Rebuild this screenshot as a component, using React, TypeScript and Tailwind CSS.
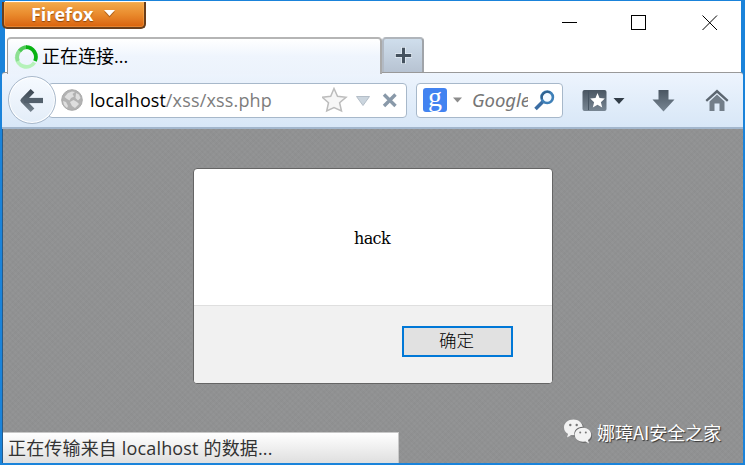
import React from "react";

const ui = "font-['Open_Sans','Noto_Sans_CJK_SC',sans-serif]";

function FirefoxButton() {
  return (
    <div className="flex h-[27px] w-[144px] items-center rounded-b-[5px] border-x-2 border-b-2 border-[#693e1b] bg-linear-to-b from-[#f3ab4b] via-[#e98a2c] to-[#d9620b] pl-[27px] shadow-[inset_0_0_0_1px_rgba(255,190,110,0.35)]">
      <span className="-mt-[2px] font-['Open_Sans',sans-serif] text-[18px] leading-[24px] font-bold tracking-[-0.05px] text-white [text-shadow:0_1px_1px_rgba(110,50,0,0.7)]">Firefox</span>
      <svg className="-mt-[2px] ml-[10px]" width="13" height="9" viewBox="0 0 13 9">
        <path d="M1 2.4H12L6.5 8.4Z" fill="#8d4a15" opacity=".6" />
        <path d="M1 1H12L6.5 7Z" fill="#fff" />
      </svg>
    </div>
  );
}

function WindowControls() {
  return (
    <svg className="mt-[12px] mr-[22px]" width="158" height="18" viewBox="0 0 158 18" fill="none" stroke="#000" shapeRendering="crispEdges">
      <path d="M1 8.5H16M70.500 1.500H84.500V15.500H70.500Z" />
      <path d="M141.500 1.500L156 16M156 1.500L141.500 16" shapeRendering="auto" />
    </svg>
  );
}

function Tabs() {
  return (
    <div className="flex h-[35px] pl-[5px]">
      <div className="z-10 flex h-[37px] w-[375px] items-center rounded-t-[4px] border-t-2 border-r-2 border-l border-t-[#b5b5b5] border-r-[#aaa] border-l-[#999] bg-linear-to-b from-white via-[#eff5fd] to-[#ecf3fc] pl-[6px]">
        <svg width="25" height="26" viewBox="0 0 25 26" fill="none" strokeWidth="3.8">
          <path d="M2.600 13A9.800 9.800 0 0 0 20.500 18.500" stroke="#b5f2b9" />
          <path d="M6.200 6.200A9.800 9.800 0 0 0 4 17" stroke="#8de093" />
          <path d="M5.500 7A9.800 9.800 0 0 1 13 3.200" stroke="#4cc955" />
          <path d="M12 3.200A9.800 9.800 0 0 1 21 17" stroke="#08b313" />
        </svg>
        <span className={`${ui} mt-[-1px] ml-[3px] text-[18px] leading-[24px] text-black`}>正在连接...</span>
      </div>
      <div className="flex h-[37px] w-[42px] items-center justify-center rounded-t-[4px] border-t-2 border-r-2 border-b-2 border-l-2 border-t-[#b0b5bb] border-r-[#a0a4a9] border-b-[#90969d] border-l-[#b2bac4] bg-linear-to-b from-[#cfdeec] to-[#b7c3d2]">
        <svg width="17" height="17" viewBox="0 0 17 17" fill="none">
          <path d="M8.500 0V17M0 8.500H17" stroke="#e2ebf3" strokeWidth="4.600" />
          <path d="M8.500 .8V16.200M.8 8.500H16.200" stroke="#45525f" strokeWidth="3" />
        </svg>
      </div>
    </div>
  );
}

function BackButton() {
  return (
    <div className="z-10 flex size-[48px] items-center justify-center rounded-full border-[1.5px] border-[#a9b9cb] bg-linear-to-b from-[#f6faff] to-[#e3edf8] shadow-[inset_0_0_0_1px_#fff]">
      <svg width="26" height="27" viewBox="0 0 26 27" fill="none">
        <defs>
          <linearGradient id="arrow" gradientUnits="userSpaceOnUse" x1="0" y1="2" x2="0" y2="25">
            <stop stopColor="#3a4550" />
            <stop offset="1" stopColor="#76848f" />
          </linearGradient>
        </defs>
        <path d="M13.500 3.800L4 13.500L13.500 23.200M5 13.500H24" stroke="url(#arrow)" strokeWidth="5.200" strokeLinejoin="round" />
        <rect x="5" y="10.900" width="19" height="5.200" fill="#53606c" />
      </svg>
    </div>
  );
}

function AddressBar() {
  return (
    <div className="-ml-[8px] flex h-[35px] w-[359px] items-center rounded-[4px] border border-[#a7b8ca] bg-white pl-[11px]">
      <svg className="shrink-0" width="24" height="24" viewBox="0 0 24 24">
        <circle cx="12" cy="12" r="10.300" fill="#b2b2b2" stroke="#aaa" />
        <path d="M4.500 9L8 5L12 3.500L15 4L12.500 6L14 8.500L11 10L9.500 12.500L7 11ZM16 5L19 6.500L20.500 10L18 12.500L15.500 10ZM10 14L13.500 12L17 14L19 16L15 20L12 18ZM3 13L6 14L8 18L7 20L4 17Z" fill="#dedede" />
      </svg>
      <span className="ml-[6px] w-[232px] font-['Open_Sans',sans-serif] text-[18px] leading-[24px] tracking-[0.16px] text-[#7d7d7d]"><span className="tracking-[0.05px] text-black">localhost</span>/xss/xss.php</span>
      <svg className="shrink-0" width="78" height="26" viewBox="0 0 78 26">
        <path d="M12 1.500L15.500 9.300L24 10.200L17.600 15.700L19.500 24L12 20.500L4.700 24L6.500 15.700L.300 10.200L8.700 9.300Z" fill="#f6f6f6" stroke="#bcbcbc" strokeWidth="1.500" />
        <path d="M34.500 9.500H47.500L41 18.500Z" fill="#cbd5de" stroke="#b4bec8" />
        <path d="M62 7.500L73.500 19M73.500 7.500L62 19" stroke="#8999a9" strokeWidth="3.400" />
      </svg>
    </div>
  );
}

function SearchBox() {
  return (
    <div className="ml-[9px] flex h-[35px] w-[147px] items-center rounded-[4px] border border-[#a7b8ca] bg-white pl-[6px]">
      <div className="flex size-[24px] items-center justify-center overflow-hidden rounded-[3px] bg-[#4283f1] pb-[7px] font-['Liberation_Serif',serif] text-[28px] leading-[24px] text-white">g</div>
      <svg className="ml-[6px]" width="9" height="6" viewBox="0 0 9 6"><path d="M0 .5H9L4.500 5.500Z" fill="#8c8c8c" /></svg>
      <div className="ml-[10px] w-[56px] overflow-hidden font-['Noto_Sans',sans-serif] text-[18.500px] leading-[26px] text-[#767676] italic">Google</div>
      <svg className="ml-[6px]" width="21" height="21" viewBox="0 0 21 21" fill="none">
        <path d="M1.500 19L9 11.500" stroke="#3b6da3" strokeWidth="3.500" />
        <circle cx="13.200" cy="7.300" r="5.700" stroke="#3f80b8" strokeWidth="2.600" fill="#f4faff" />
        <path d="M8 9A5.700 5.700 0 0 1 16 2.400" stroke="#2e6290" strokeWidth="2" />
      </svg>
    </div>
  );
}

function ToolbarIcons() {
  return (
    <svg className="ml-[17px]" width="154" height="30" viewBox="580 85 154 30">
      <defs>
        <linearGradient id="steel" x1="0" y1="0" x2="0" y2="1">
          <stop stopColor="#4a5662" />
          <stop offset="1" stopColor="#788693" />
        </linearGradient>
      </defs>
      <rect x="582.500" y="90" width="24" height="21" rx="2" fill="url(#steel)" />
      <path d="M588.500 91V110" stroke="#465461" />
      <path d="M597.500 93L599.500 98L604.800 98.500L600.900 102.300L602.200 107.500L597.500 104.800L592.800 107.500L594.100 102.300L590.200 98.500L595.500 98Z" fill="#fff" />
      <path d="M613.500 98H624.500L619 104Z" fill="#323d48" />
      <path d="M658.500 90H668.500V99.500H674.500L663.500 111.500L652.500 99.500H658.500Z" fill="url(#steel)" />
      <path d="M717 89.500L728.500 100L727 101.800L717 93L707 101.800L705.500 100Z" fill="#5c6670" />
      <path d="M717 94.500L724.500 101.500V111H719.500V103.500H714.500V111H709.500V101.500Z" fill="#737e89" />
    </svg>
  );
}

function AlertDialog() {
  return (
    <div className="mt-[39px] ml-[190px] flex h-[216px] w-[360px] flex-col overflow-hidden rounded-[4px] border border-[#656565] bg-white text-black">
      <div className="flex h-[136px] items-center justify-center pt-[3px] pr-[2px]">
        <span className="font-['DejaVu_Serif',serif] text-[16px] leading-[24px] tracking-[-0.6px]">hack</span>
      </div>
      <div className="flex flex-1 items-start justify-end border-t border-[#dfdfdf] bg-[#f1f1f1] pt-[20px] pr-[39px]">
        <button className="flex h-[31px] w-[111px] items-center justify-center border-2 border-[#0078d7] bg-[#e1e1e1] pr-[2px] pb-[4px] font-['Noto_Sans_CJK_SC',sans-serif] text-[17.500px] leading-[24px] font-light">确定</button>
      </div>
    </div>
  );
}

function Watermark() {
  return (
    <div className="absolute top-[290px] left-[561px] flex items-center">
      <svg width="28" height="26" viewBox="0 0 28 26">
        <g fill="#555" opacity=".65" transform="translate(1 1)">
          <ellipse cx="9.500" cy="8.500" rx="9.500" ry="8" />
          <ellipse cx="19" cy="16" rx="8.200" ry="7" />
        </g>
        <path d="M9.500 .5C4.100 .5 0 4 0 8.500C0 11.300 1.500 13.500 4 15L3 18.500L7 16.300H10.500C9.500 11.700 13 7.800 18.800 7.800C18 3.300 14.200 .5 9.500 .5Z" fill="#f2f2f2" />
        <path d="M19 8.700C14.300 8.700 10.800 11.800 10.800 15.700C10.800 19.600 14.300 22.700 19 22.700L21.500 22.400L25 24.500L24 21C26 19.700 27.200 17.800 27.200 15.700C27.200 11.800 23.500 8.700 19 8.700Z" fill="#f2f2f2" />
        <g fill="#777"><circle cx="6.300" cy="6" r="1.200" /><circle cx="12.700" cy="6" r="1.200" /><circle cx="16.200" cy="13.400" r="1" /><circle cx="21.800" cy="13.400" r="1" /></g>
      </svg>
      <span className="-mt-[1px] ml-[5px] font-['Noto_Sans_CJK_SC',sans-serif] text-[18px] leading-[26px] whitespace-nowrap text-white [text-shadow:1px_1px_1px_#333]">娜璋AI安全之家</span>
    </div>
  );
}

export default function App() {
  return (
    <div className="flex h-[465px] w-[745px] flex-col overflow-hidden bg-[#1a83da] pt-px pr-[2px] pb-[2px] pl-[2px]">
      <div className="mr-[2px] flex h-[71px] flex-col border-l-[3px] border-[#1a83da] bg-white">
        <div className="-ml-[3px] flex h-[36px] justify-between pt-px">
          <FirefoxButton />
          <WindowControls />
        </div>
        <div className="-ml-[3px]"><Tabs /></div>
      </div>
      <div className="flex h-[57px] shrink-0 items-center rounded-t-[3px] border-t border-b-2 border-t-[#999] border-b-[#a2b6cc] bg-linear-to-b from-[#edf4fd] to-[#d8e7f7] pl-[6px]">
        <BackButton />
        <AddressBar />
        <SearchBox />
        <ToolbarIcons />
      </div>
      <main className="relative flex flex-1 flex-col border-l border-[#265b8a] bg-[#939495] bg-[repeating-linear-gradient(135deg,rgba(110,110,110,0.07)_0_2px,transparent_2px_4px),repeating-linear-gradient(45deg,rgba(110,110,110,0.07)_0_2px,transparent_2px_4px)]">
        <AlertDialog />
        <Watermark />
        <div className={`${ui} absolute bottom-0 left-0 flex h-[31px] w-[396px] items-center border-t border-r border-[#c8c8c8] bg-linear-to-b from-white to-[#dfdfdf] pl-[5px] text-[18px] leading-[24px] tracking-[0.16px] whitespace-pre text-[#333]`}>正在传输来自 localhost 的数据...</div>
      </main>
    </div>
  );
}
